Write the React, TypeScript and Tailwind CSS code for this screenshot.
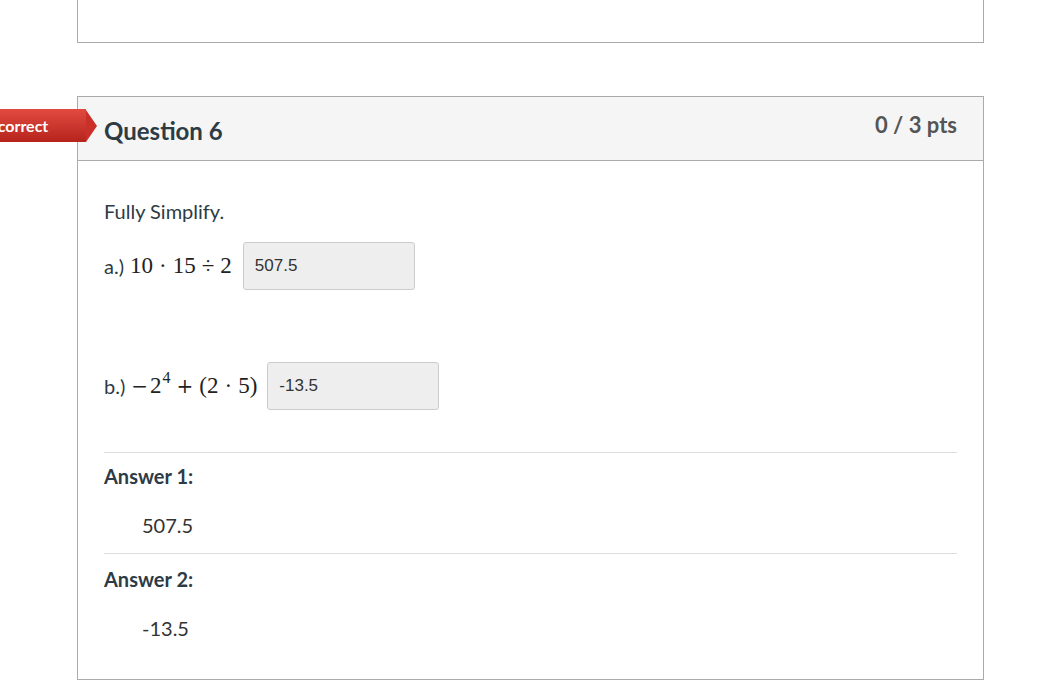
import React from "react";

const lato = { fontFamily: "Lato, 'Noto Sans', sans-serif" };

const MathA = () => (
  <span className="font-['Liberation_Serif',serif] text-[23px] text-[#222] flex items-baseline">
    <span>10</span>
    <span className="mx-[6px]">·</span>
    <span>15</span>
    <span className="mx-[6px]">÷</span>
    <span>2</span>
  </span>
);

const MathB = () => (
  <span className="font-['Liberation_Serif',serif] text-[23px] text-[#222] flex items-baseline">
    <span className="font-['DejaVu_Serif',serif] text-[20px]">−</span>
    <span className="ml-[2px]">2</span>
    <span className="text-[16px] relative -top-[10px] ml-[1px]">4</span>
    <span className="mx-[6px] font-['DejaVu_Serif',serif] text-[20px]">+</span>
    <span>(2</span>
    <span className="mx-[6px]">·</span>
    <span>5)</span>
  </span>
);

const AnswerBox = ({ value }: { value: string }) => (
  <div className="w-[172px] h-[48px] bg-[#eeeeee] border border-[#cccccc] rounded-[3px] px-[11px] pt-[14px] text-[17px] text-[#333] font-['Liberation_Sans',sans-serif] leading-none">
    {value}
  </div>
);

export default function App() {
  return (
    <div className="bg-white min-h-[695px] w-[1059px] relative overflow-hidden" style={lato}>
      {/* previous question card (bottom edge) */}
      <div className="ml-[77px] w-[907px] h-[43px] border-x border-b border-[#aaaaaa] bg-white" />

      <div className="relative mt-[53px] ml-[77px] w-[907px] border border-[#aaaaaa] bg-white">
        {/* incorrect flag */}
        <div className="absolute -left-[108px] top-[12px] flex items-center">
          <div className="h-[33px] w-[116px] bg-gradient-to-b from-[#e24a40] to-[#b5231b] text-white font-bold text-[16px] flex items-center pl-[14px]">
            Incorrect
          </div>
          <div className="w-0 h-0 border-y-[16.5px] border-y-transparent border-l-[11px] border-l-[#c9302a]" />
        </div>

        <div className="h-[64px] bg-[#f5f5f5] border-b border-[#aaaaaa] flex items-start justify-between px-[26px]">
          <h2 className="text-[24px] leading-[28px] font-bold text-[#2d3b45] mt-[20px]">Question 6</h2>
          <div className="text-[22px] leading-[26px] font-bold text-[#555555] mt-[15px]">0 / 3 pts</div>
        </div>

        <div className="px-[26px] pt-[37px] pb-[39px] text-[#2d3b45]">
          <p className="text-[20px] leading-[26px]">Fully Simplify.</p>

          <div className="flex items-center mt-[18px]">
            <span className="text-[20px] mr-[6px]">a.)</span>
            <MathA />
            <div className="ml-[11px]">
              <AnswerBox value="507.5" />
            </div>
          </div>

          <div className="flex items-center mt-[72px]">
            <span className="text-[20px] mr-[6px]">b.)</span>
            <MathB />
            <div className="ml-[10px]">
              <AnswerBox value="-13.5" />
            </div>
          </div>

          <div className="mt-[42px] border-t border-[#dddddd]">
            <div className="text-[20px] leading-[24px] font-bold text-[#2d3b45] pt-[11px]">Answer 1:</div>
            <div className="text-[20px] leading-[24px] text-[#333] pl-[38px] pt-[25px] pb-[16px]">507.5</div>
          </div>
          <div className="border-t border-[#dddddd]">
            <div className="text-[20px] leading-[24px] font-bold text-[#2d3b45] pt-[13px]">Answer 2:</div>
            <div className="text-[20px] leading-[24px] text-[#333] pl-[38px] pt-[25px]">-13.5</div>
          </div>
        </div>
      </div>
    </div>
  );
}
